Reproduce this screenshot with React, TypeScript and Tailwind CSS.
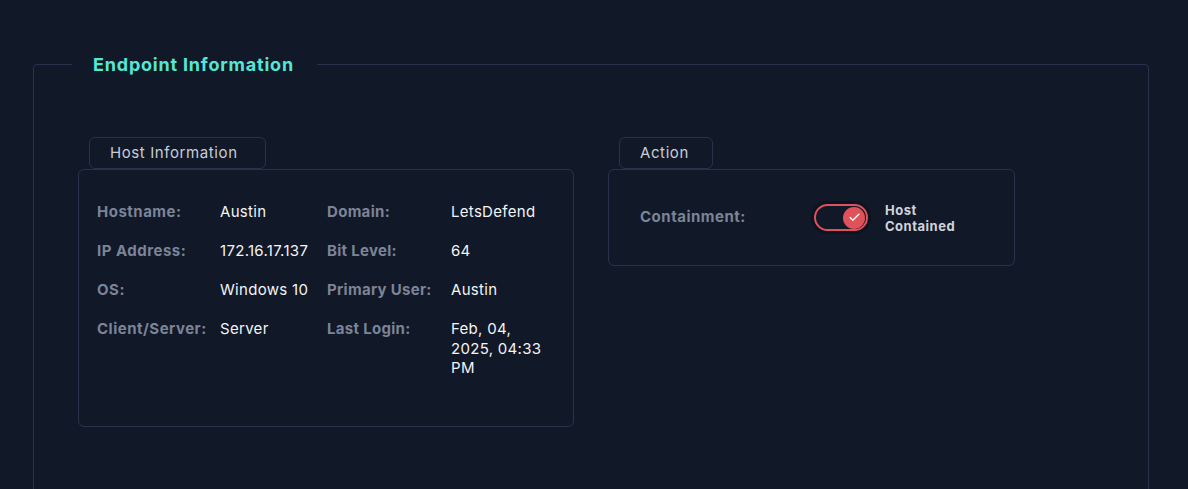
import { Check } from "lucide-react"

const rows: [string, string, string, string][] = [
  ["Hostname:", "Austin", "Domain:", "LetsDefend"],
  ["IP Address:", "172.16.17.137", "Bit Level:", "64"],
  ["OS:", "Windows 10", "Primary User:", "Austin"],
  ["Client/Server:", "Server", "Last Login:", "Feb, 04, 2025, 04:33 PM"],
]

function Tab({ label, className }: { label: string; className?: string }) {
  return (
    <div
      className={
        "ml-[11px] h-[32px] rounded-[6px] border border-[#28324c] flex items-center pl-[20px] pt-[1px] text-[15px] tracking-[0.6px] text-[#c9cdd5] " +
        (className ?? "")
      }
    >
      {label}
    </div>
  )
}

export default function App() {
  return (
    <div className="min-h-screen bg-[#111827] pt-[51px] pl-[33px] pr-[39px] font-['Inter',sans-serif] overflow-hidden">
      <fieldset className="h-[520px] rounded-[4px] border border-[#28324c] pl-[44px] pt-[59px]">
        <legend className="-ml-[6px] w-[245px] px-[21px] text-[18px] font-bold tracking-[0.8px] text-[#55e6d6]">
          Endpoint Information
        </legend>

        <div className="flex gap-[34px]">
          <div className="w-[496px]">
            <Tab label="Host Information" className="w-[177px]" />
            <div className="rounded-[6px] border border-[#28324c] pl-[18px] pr-[12px] pt-[32px] pb-[48px]">
              <div className="grid grid-cols-[123px_107px_124px_104px] gap-y-[19px] text-[15px] leading-[20px] tracking-[0.3px]">
                {rows.map(([l1, v1, l2, v2]) => (
                  <>
                    <div key={l1} className="font-bold text-[#7b8498] tracking-[0.5px]">{l1}</div>
                    <div className="text-[#f3f4f6]">{v1}</div>
                    <div className="font-bold text-[#7b8498]">{l2}</div>
                    <div className="text-[#f3f4f6] w-[96px] leading-[19.5px]">{v2}</div>
                  </>
                ))}
              </div>
            </div>
          </div>

          <div className="w-[407px]">
            <Tab label="Action" className="w-[94px]" />
            <div className="h-[97px] rounded-[6px] border border-[#28324c] pl-[31px] flex items-center">
              <div className="w-[174px] text-[15px] font-bold tracking-[0.5px] text-[#7b8498]">Containment:</div>
              <div className="relative h-[27px] w-[54px] rounded-full border-2 border-[#e0525a] bg-[#111827] shadow-[0_0_0_3px_#0d1320]">
                <div className="absolute right-[1px] top-[0.5px] h-[22px] w-[22px] rounded-full bg-[#e0525a] flex items-center justify-center">
                  <Check className="h-[13px] w-[13px] text-white" strokeWidth={2.5} />
                </div>
              </div>
              <div className="ml-[17px] text-[13px] font-bold leading-[16px] tracking-[0.5px] text-[#d0d4dc]">
                Host
                <br />
                Contained
              </div>
            </div>
          </div>
        </div>
      </fieldset>
    </div>
  )
}
